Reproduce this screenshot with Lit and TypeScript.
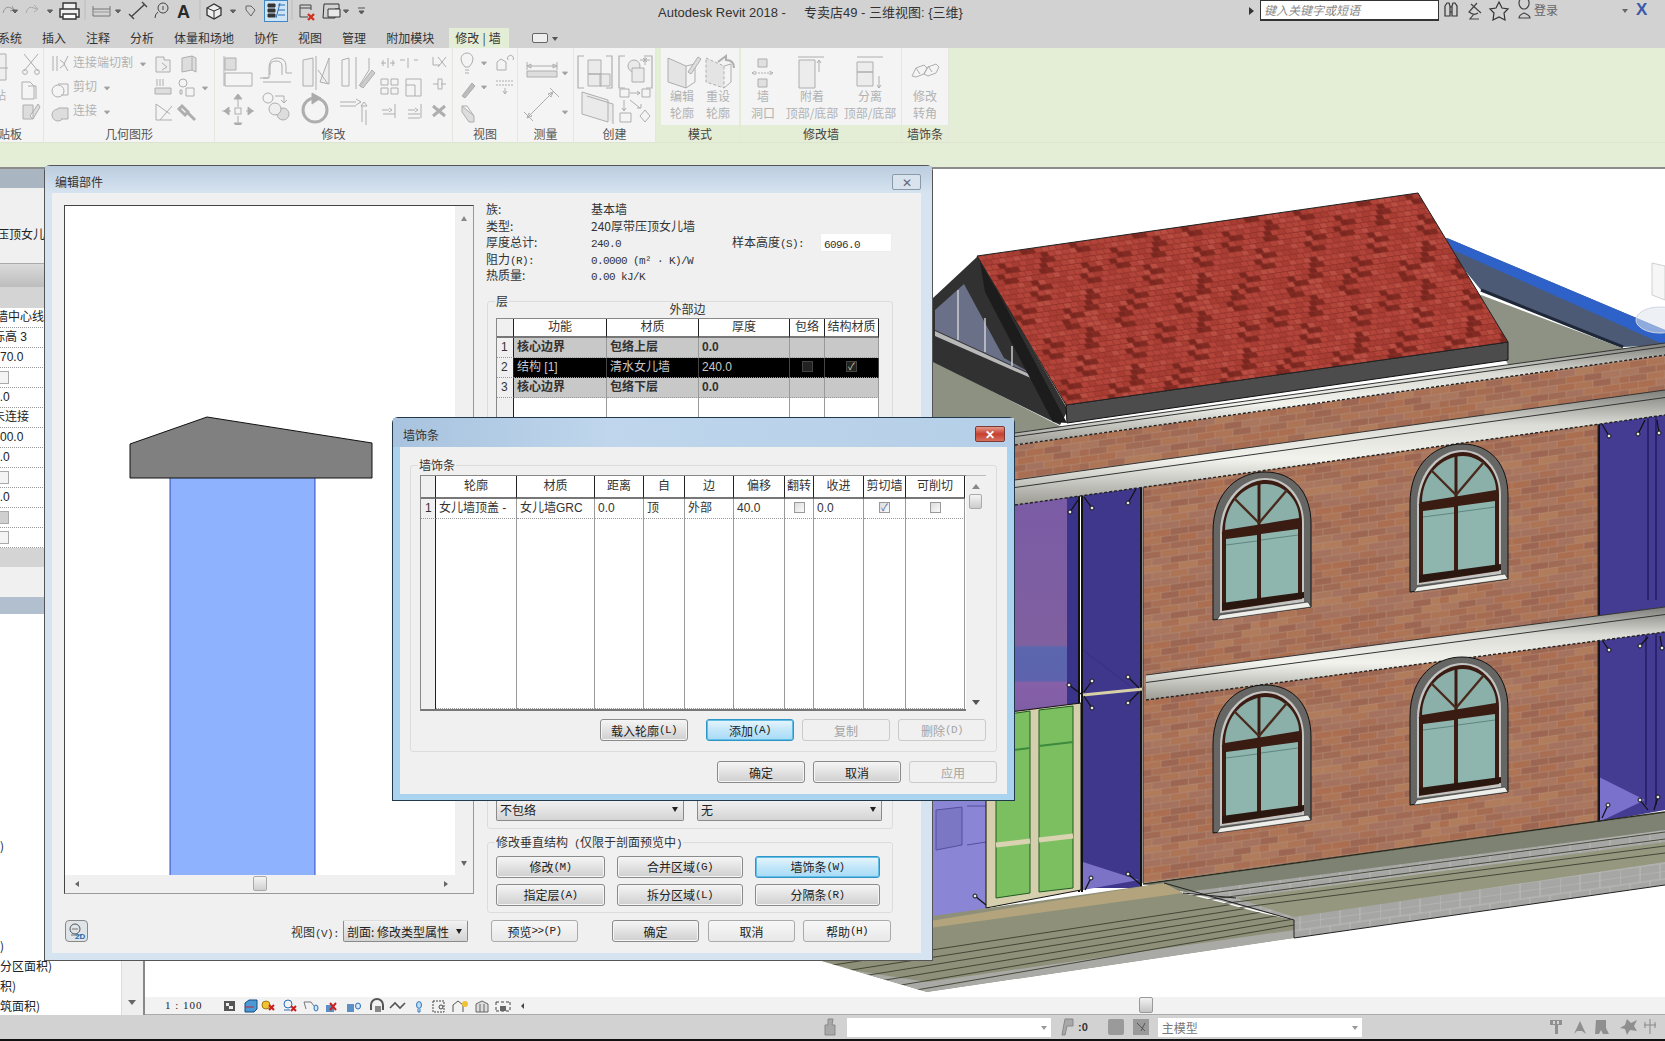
import { LitElement, html, css } from "lit";
import { customElement } from "lit/decorators.js";
import { unsafeSVG } from "lit/directives/unsafe-svg.js";

const arrow = (x: number, y: number, c = "#777") => `<path d="M${x - 2.5} ${y - 1}h5l-2.5 3z" fill="${c}"/>`;
const T = (x: number, y: number, s: string, extra = "") => `<text x="${x}" y="${y}" ${extra}>${s}</text>`;

/* ---------- ribbon drawings, in page coordinates ---------- */
const rb = {
  clip: `
    <path d="M-8 54h14v26h-14z" fill="#eee"/><path d="M-2 80v-12h10" />
    <path d="M24 54l14 17M38 54l-14 17" /><circle cx="25" cy="72" r="2.4"/><circle cx="37" cy="72" r="2.4"/>
    <path d="M22 82h8l4 4v13h-12zM28 86h8v13"/>
    <path d="M23 105h10v14h-10zM38 104l-8 12 3 3 7-12z" fill="#ddd"/>
    ${T(-6, 100, "贴", 'class="t"')}`,
  geom: `
    <path d="M53 56v15M57 56v15M60 60l5 4-5 4M68 56l-4 8 4 7" />
    ${T(73, 67, "连接端切割", 'class="t"')}${arrow(143, 64, "#999")}
    <path d="M156 57h8v3h6v12h-14zM162 63l5 4-5 3" fill="#eee"/><path d="M182 58l10-2v14l-10 2zM192 56l4 2v14l-4-2" fill="#ddd"/>
    <circle cx="58" cy="91" r="6"/><path d="M58 84h10v11h-7" />
    ${T(73, 91, "剪切", 'class="t"')}${arrow(107, 88, "#999")}
    <path d="M157 79v7M160 79v7M163 79v7M155 88h16v6h-16z" fill="#ddd"/><circle cx="183" cy="83" r="4"/><path d="M180 90h2v4h-2zM186 88h8v8h-8z"/>${arrow(205, 88, "#999")}
    <circle cx="58" cy="115" r="6" fill="#ddd"/><path d="M58 108h10v11h-7" fill="#ddd"/>
    ${T(73, 115, "连接", 'class="t"')}${arrow(107, 112, "#999")}
    <path d="M156 104v16h16M156 104l14 10M160 120l12-14"/><path d="M182 106l6 6-3 3-6-6zM187 112l8 8" stroke-width="3"/>`,
  modify: `
    <path d="M224 56v30M225 58h11v12h-11z" fill="#ddd"/><path d="M225 73h27v13h-27z" fill="#f4f4f4"/>
    <path d="M263 82h28M263 78h6v-10q0-10 8-10q9 0 9 8v7h6M268 78h-8M270 75v-8q0-6 6-6q6 0 6 5v9" />
    <path d="M303 60l10-2v28h-10zM316 56v34M329 58v26l-9-2z" fill="#eee"/><path d="M318 70l10 14" />
    <path d="M342 60l7-2v28h-7zM356 57v32M369 58v12l-10 16" fill="none"/><path d="M360 86l12-16 3 3-12 15z" fill="#ccc"/>
    <path d="M238 97v10M238 116v10M222 111h9M246 111h8" /><path d="M238 94l-4 5h8zM238 128l-4-5h8zM224 111l5-4v8zM253 111l-5-4v8z" fill="#aaa"/><rect x="235" y="108" width="6" height="6"/>
    <circle cx="268" cy="98" r="5"/><circle cx="283" cy="114" r="6" fill="#ddd"/><circle cx="275" cy="109" r="6" fill="#eee"/><path d="M275 96h9v7M281 100l3 3 3-3"/>
    <circle cx="315" cy="110" r="12" fill="none" stroke-width="3"/><path d="M312 93l9 5-9 6z" fill="#aaa"/>
    <path d="M340 102h16M340 106h16M356 99l5 3-5 3M362 106v16M366 110v16M364 102l-3 4h6z"/>
    <path d="M383 60v6M393 60v6M381 63h5M390 63h5M388 58v10M400 60h5M414 60h4M408 58v10"/><path d="M433 57v8h7M438 57l8 10M446 57l-8 10"/>
    <path d="M381 79h7v6h-7zM391 79h7v6h-7zM381 88h7v6h-7zM391 88h7v6h-7z"/><path d="M406 79h15v17h-15zM406 85h9v11"/><path d="M433 84h5M441 84h5M438 79h4v10h-4z"/>
    <path d="M382 110h7M389 108l3 2-3 2M395 104v14M383 114h12"/><path d="M408 110h7M415 108l3 2-3 2M421 104v14M408 114h12M408 118h12"/><path d="M433 106l12 10M445 106l-12 10" stroke-width="3"/>`,
  view: `
    <path d="M465 67q-4-4-4-8a6 6 0 0 1 12 0q0 4-4 8z" /><path d="M465 70h4M465 73h4"/>${arrow(484, 63, "#999")}
    <path d="M497 62l4-3 5 3v8h-9zM508 60a3 3 0 1 1 5 0"/>
    <path d="M462 96l10-13 3 3-10 12z" fill="#bbb"/>${arrow(484, 87, "#999")}
    <path d="M496 81h17M496 85h17" stroke-dasharray="2 1"/><path d="M505 88v5M503 91l2 3 2-3"/>
    <path d="M462 106l12 10v6h-5l-7-10z" fill="#ddd"/><path d="M462 106h5l7 10"/>`,
  measure: `
    <path d="M527 66h30M527 62v8M557 62v8M527 66l4-2v4zM557 66l-4-2v4z"/><path d="M527 71h30v6h-30z" fill="#ddd"/>${arrow(565, 73, "#999")}
    <path d="M527 118l26-26M524 112l9 9M550 88l9 9M527 118l2-5 3 3zM553 92l-2 5-3-3z"/>${arrow(565, 112, "#999")}`,
  create: `
    <path d="M584 56h-6v32h6M606 56h6v32h-6" stroke-width="1.2"/><path d="M588 60h13v14h-13zM588 74h13v12h-13zM600 74h10v12h-10z" fill="#eaeaea"/>
    <path d="M625 56h-6v32h6M646 56h6v32h-6" stroke-width="1.2"/><circle cx="634" cy="66" r="6" fill="#eaeaea"/><path d="M632 68h12v14h-12z" fill="#eaeaea"/><path d="M643 58l4 4M647 58l-4 4M645 55v10M640 60h10"/>
    <path d="M582 92l26 8v22l-26-8zM587 96l26 8v20" fill="#eaeaea"/>
    <path d="M620 89h9v8h-9zM642 89h8v8h-8zM630 93h10M637 91l3 2-3 2M624 100v10M622 108l2 3 2-3M630 100l10 8M637 108h4v-4M620 113h11v9h-11z" /><path d="M645 110l5 6-5 6-5-6z"/>`,
  mode: `
    <path d="M668 58l18 8v22l-18-6z" fill="#e4e4e4"/><path d="M686 66l9-2v18l-9 6"/><path d="M688 72l10-15 3 2-10 15z" fill="#ddd"/>
    <path d="M706 58l18 8v22l-18-6z" fill="#e4e4e4" stroke-dasharray="3 2"/><path d="M724 66l7-2v18l-7 6"/><path d="M718 62l8-6v4q8 0 8 8" stroke-width="2"/>
    ${T(682, 101, "编辑", 'class="tc"')}${T(682, 118, "轮廓", 'class="tc"')}${T(718, 101, "重设", 'class="tc"')}${T(718, 118, "轮廓", 'class="tc"')}`,
  wall: `
    <path d="M758 59h9v8h-9zM758 79h9v8h-9z" fill="#e0e0e0"/><path d="M752 73h21M752 73l3-2v4zM773 73l-3-2v4z" stroke-dasharray="2 1"/>
    <path d="M798 57h26M799 60h16v28h-16z" fill="#ececec"/><path d="M819 72v-12M817 63l2-3 2 3"/>
    <path d="M857 57h26M857 62h16v10h-16zM857 72h16v14h-16z" fill="#ececec"/><path d="M879 76v12M877 85l2 3 2-3"/>
    ${T(763, 101, "墙", 'class="tc"')}${T(763, 118, "洞口", 'class="tc"')}
    ${T(812, 101, "附着", 'class="tc"')}${T(812, 118, "顶部/底部", 'class="tc"')}
    ${T(870, 101, "分离", 'class="tc"')}${T(870, 118, "顶部/底部", 'class="tc"')}`,
  sweep: `
    <path d="M912 76l4-8 8-3 3 3-3 6-8 3zM924 74l4-7 8-3 3 3-3 6-8 3z" fill="#f4f4f4"/><path d="M916 68l4 6M928 66l4 6"/>
    ${T(925, 101, "修改", 'class="tc"')}${T(925, 118, "转角", 'class="tc"')}`,
};

/* ---------- quick access, page coordinates ---------- */
const qa = `
  <g fill="none" stroke="#5a5a5a">
    <path d="M3 13q2-8 8-5l3 2M12 6l2 4-4 1" stroke="#999"/>${arrow(15, 11, "#666")}
    <path d="M26 13q2-8 8-5l3 1M34 5l4 4-4 3" stroke="#aaa"/>${arrow(50, 11, "#666")}
    <path d="M63 3h13v6h-13zM60 9h19v8h-19z" stroke="#333" fill="#f0f0f0" stroke-width="1.4"/><path d="M63 14h13v5h-13z" fill="#fff" stroke="#333" stroke-width="1.4"/>
    <path d="M93 9h17v7h-17zM93 6v3M110 6v3" stroke="#777"/><path d="M94 12h15" stroke="#999"/>${arrow(118, 11, "#666")}
    <path d="M131 17l14-13M129 14l5 5M142 2l5 5" stroke="#444" stroke-width="1.4"/>
    <circle cx="163" cy="8" r="5" stroke="#444"/><path d="M155 18q0-4 3-6M163 6v4" stroke="#444"/>
    <path d="M207 8l7-4 7 4v7l-7 4-7-4z" stroke="#333" fill="#eee" stroke-width="1.3"/><path d="M207 8l7 3 7-3M214 11v8" stroke="#333"/>${arrow(233, 11, "#666")}
    <path d="M246 6h5l4 4-4 6-5-6z" stroke="#666"/>
    <rect x="264.5" y="0.5" width="23" height="21" fill="#cde4f7" stroke="#3f88c5"/>
    <path d="M268 4h7v3h-7zM268 9h7v3h-7zM268 14h7v3h-7z" fill="#333" stroke="#333"/><path d="M278 5h7M278 10h7M278 15h7M276 18l4-15" stroke="#2a6cb0"/>
    <path d="M300 5h11v5M300 5v12h8M300 8h11" stroke="#444"/>
    <path d="M308 14l6 6M314 14l-6 6" stroke="#d03020" stroke-width="2.4"/>
    <path d="M324 4h15v5h-4v9h-12z" stroke="#333"/><path d="M328 9h12v8h-12z" stroke="#333" fill="#e8e8e8"/>${arrow(346, 11, "#666")}
    <path d="M358 8h7" stroke="#555"/>${arrow(361.5, 12, "#555")}
  </g>
  <text x="177" y="18" style="font:bold 18px 'Liberation Sans'" fill="#2a2a2a">A</text>
  <path d="M85 0v20M200 0v20M292 0v20" stroke="#bcbcbc"/>`;

const topRight = `
  <g fill="none" stroke="#333" stroke-width="1.2">
    <path d="M2 6l2-3h2l1 3v10h-5zM9 6l1-3h2l2 3v10h-5zM7 7h2M7 12h2"/>
    <path d="M28 4l10 9M34 3l-8 9q5 4 9 1M31 14l-4 5h9" stroke="#444"/>
    <path d="M56 2l3 6 6 1-4 4 1 7-6-3-6 3 1-7-4-4 6-1z" stroke="#333"/>
    <path d="M81 9a5 6 0 1 1 .1 0M76 18q0-3 5-5q6 2 6 5z" stroke="#444"/>
  </g>`;

/* ---------- tiny status / view-bar drawings ---------- */
const viewIcons = `
  <rect x="224" y="5" width="11" height="10" fill="#555"/><path d="M226 7h3v3h-3zM229 10h4v3h-4z" fill="#eee"/>
  <path d="M245 7l4-3h8v9l-3 3h-9z" fill="#4b98d5" stroke="#124d80"/><path d="M245 11h9" stroke="#c23"/>
  <circle cx="266" cy="9" r="4" fill="#f1c232" stroke="#a07a10"/><path d="M269 9l5 5M274 9l-5 5" stroke="#c82020" stroke-width="2"/>
  <circle cx="288" cy="8" r="4" fill="none" stroke="#2a6fb8"/><path d="M284 14h6" stroke="#2a6fb8"/><path d="M291 10l5 5M296 10l-5 5" stroke="#c82020" stroke-width="2"/>
  <path d="M304 6h7l3 4M304 6l2 7" fill="none" stroke="#777"/><ellipse cx="316" cy="12" rx="2" ry="3" fill="#d6e8f7" stroke="#2a6fb8"/>
  <path d="M326 9h8v7h-8z" fill="#5c8fc4"/><path d="M330 7l6 7M336 7l-6 7" stroke="#c82020" stroke-width="2"/>
  <path d="M347 8h7v8h-7z" fill="#5c8fc4"/><ellipse cx="358" cy="10" rx="2.5" ry="3" fill="#d6e8f7" stroke="#2a6fb8"/>
  <path d="M371 14v-5a6 6 0 0 1 12 0v5" fill="none" stroke="#555" stroke-width="2"/><rect x="375" y="10" width="6" height="6" fill="#888"/>
  <path d="M390 12l5-5 5 5 5-5" fill="none" stroke="#555" stroke-width="1.6"/>
  <ellipse cx="419" cy="9" rx="2.5" ry="3.4" fill="#bfdcf3" stroke="#2f78c0"/><path d="M418 13v3h2v-3" fill="none" stroke="#2f78c0"/>
  <path d="M433 5h11v11h-11z" fill="none" stroke="#444" stroke-dasharray="2 1"/><circle cx="441" cy="11" r="2" fill="none" stroke="#444"/>
  <path d="M453 16v-7l5-4 5 4v7" fill="none" stroke="#555"/><circle cx="465" cy="8" r="3" fill="#f0c233"/>
  <path d="M476 8l6-3 6 3v8h-12z" fill="#ddd" stroke="#666"/><path d="M480 8v8M484 8v8" stroke="#666"/>
  <path d="M496 6h14M496 15h14M496 6v9M510 6v9" stroke="#444" stroke-dasharray="3 2" fill="none"/><path d="M500 10h6v5h-6z" fill="#666"/>
  <path d="M524 7v6l-3-3z" fill="#444"/>`;

/* ---------- building ---------- */
function rnd(seed: number) {
  let s = seed;
  return () => ((s = (s * 16807) % 2147483647) / 2147483647);
}
function brickPattern() {
  const r = rnd(7);
  const cols = ["#a86f55", "#a66c52", "#ad7556", "#a06a54", "#aa765e", "#ab6e50", "#a4725e", "#b07c5c", "#9c6652"];
  let s = `<rect width="180" height="56" fill="#b48e78"/>`;
  for (let row = 0; row < 8; row++) {
    for (let c = -1; c < 10; c++) {
      const x = c * 18 + (row % 2 ? 9 : 0);
      s += `<rect x="${x + 0.4}" y="${row * 7 + 0.5}" width="17.4" height="6.4" fill="${cols[Math.floor(r() * cols.length)]}"/>`;
    }
  }
  return `<pattern id="brick" width="180" height="56" patternUnits="userSpaceOnUse" patternTransform="matrix(1,-0.135,0,1,0,0)">${s}</pattern>`;
}
function tilePattern() {
  const r = rnd(31);
  let s = `<rect width="112" height="75" fill="#8d2f28"/>`;
  const grid: string[][] = [];
  for (let row = 0; row < 15; row++) {
    grid.push([]);
    for (let c = 0; c < 16; c++) {
      const v = r();
      grid[row].push(v < 0.5 ? "#b2443a" : v < 0.85 ? "#a83d33" : "#b94e42");
    }
  }
  for (const [cx, cy] of [[2, 2], [8, 1], [13, 4], [5, 6], [11, 9], [1, 10], [7, 12], [14, 13]] as const) {
    for (let k = 0; k < 4; k++) {
      grid[(cy + k) % 15][(cx - (k >> 1) + 16) % 16] = "#7a2720";
      if (k % 2) grid[(cy + k) % 15][(cx - (k >> 1) + 17) % 16] = "#802a22";
    }
  }
  for (let row = 0; row < 15; row++) {
    for (let c = -1; c < 16; c++) {
      const x = c * 7 + (row % 2 ? 3.5 : 0);
      s += `<rect x="${x + 0.4}" y="${row * 5 + 0.4}" width="6.4" height="4.3" fill="${grid[row][(c + 16) % 16]}"/>`;
    }
  }
  return `<pattern id="tile" width="112" height="75" patternUnits="userSpaceOnUse" patternTransform="matrix(1,-0.143,0.604,1,977,256)">${s}</pattern>`;
}
function stonePattern() {
  let s = `<rect width="60" height="24" fill="#a6a6a4"/>`;
  for (let row = 0; row < 3; row++) {
    s += `<path d="M0 ${row * 8}h60" stroke="#bdbdbb"/>`;
    for (let c = 0; c < 3; c++) s += `<path d="M${c * 20 + (row % 2 ? 10 : 0)} ${row * 8}v8" stroke="#bdbdbb"/>`;
  }
  return `<pattern id="stone" width="60" height="24" patternUnits="userSpaceOnUse" patternTransform="matrix(1,-0.14,0,1,0,0)">${s}</pattern>`;
}
function win(dx: number, dy: number) {
  return `<g transform="translate(${dx} ${dy})">
    <path d="M1213 833L1213 745C1213 703 1240 685 1265 685C1294 685 1311 706 1311 737L1311 820Z" fill="#666664" stroke="#111"/>
    <path d="M1220 826L1220 746C1220 711 1244 691 1265 691C1288 691 1304 711 1304 736L1304 815Z" fill="#c4c4c2"/>
    <path d="M1222 824L1222 748C1222 713 1245 693 1266 693C1285 693 1302 712 1302 735L1302 812Z" fill="#3a1c12"/>
    <path d="M1225 743C1225 716 1245 697 1266 697C1284 697 1299 714 1299 731Z" fill="#8bb0aa"/>
    <path d="M1226 752L1257 748L1257 813L1226 818Z" fill="#8eb5ae"/><path d="M1261 747L1298 742L1298 808L1261 812Z" fill="#8eb5ae"/>
    <path d="M1226 758L1257 754M1261 753L1298 748" stroke="#5f8680" stroke-width="1"/>
    <path d="M1222 747L1301 736" stroke="#3a1c12" stroke-width="3.4"/><path d="M1259 695V815" stroke="#3a1c12" stroke-width="3"/>
    <path d="M1259 736L1234 711M1259 736L1287 703" stroke="#4a2a1c" stroke-width="2.4"/>
    <path d="M1222 816L1304 805V811L1222 823Z" fill="#2a1710"/>
    <path d="M1220 828L1308 815L1311 820L1217 833Z" fill="#eeeeea" stroke="#222" stroke-width=".6"/>
  </g>`;
}
function spider(x: number, y: number, tx: number, ty: number) {
  return `<path d="M${x} ${y}L${tx} ${ty}" stroke="#111" stroke-width="1.2"/><circle cx="${tx}" cy="${ty}" r="2" fill="#e8e8e8" stroke="#111"/>`;
}
function cornice(y1: number, y2: number, h: number, x1 = 1015, x2 = 1665) {
  return `<path d="M${x1} ${y1}L${x2} ${y2}L${x2} ${y2 + h}L${x1} ${y1 + h}Z" fill="url(#corn)"/>
    <path d="M${x1} ${y1}L${x2} ${y2}M${x1} ${y1 + h * 0.3}L${x2} ${y2 + h * 0.3}" stroke="#333" stroke-width="1"/>
    <path d="M${x1} ${y1 + h}L${x2} ${y2 + h}" stroke="#222" stroke-width="1.4" stroke-dasharray="3 2"/>`;
}
function building() {
  let stepLines = "";
  for (let i = 0; i < 6; i++) {
    const y = 950 + i * 8;
    stepLines += `<path d="M800 ${y + 20}L1300 ${y - 56 - i * 2}" stroke="#3a3d2e" stroke-width=".9"/>`;
  }
  let baseLines = "";
  for (let i = 0; i < 4; i++) {
    baseLines += `<path d="M1190 ${896 + i * 6}L1665 ${832 + i * 7}" stroke="#3a3d30" stroke-width=".9"/>`;
  }
  return `
  <defs>${brickPattern()}${tilePattern()}${stonePattern()}
    <linearGradient id="corn" x1="0" y1="0" x2="0" y2="1"><stop offset="0" stop-color="#7e7e7a"/><stop offset=".3" stop-color="#dcdcd6"/><stop offset=".6" stop-color="#f3f3ee"/><stop offset="1" stop-color="#9b9b94"/></linearGradient>
    <linearGradient id="purp" x1="0" y1="0" x2="0" y2="1"><stop offset="0" stop-color="#7a5ba6"/><stop offset=".66" stop-color="#80609f"/><stop offset=".67" stop-color="#5a66ad"/><stop offset=".81" stop-color="#5d63ad"/><stop offset=".82" stop-color="#8660a8"/><stop offset="1" stop-color="#7c5da5"/></linearGradient>
    <clipPath id="stepclip"><path d="M818 960L927 992L1294 938L1294 920L1257 912L1220 902L1183 893L1164 883L800 935Z"/></clipPath>
  </defs>
  <!-- far parapet -->
  <path d="M1447 238L1665 330L1665 345L1623 347L1481 290L1440 240Z" fill="#4c5a75"/>
  <path d="M1447 238L1665 330L1665 345L1453 250Z" fill="#2f62c8"/>
  <path d="M1481 290L1623 347" stroke="#1f2838" stroke-width="3"/>
  <path d="M1481 295L1625 349L1509 366L1470 300Z" fill="#8e9284"/>
  <!-- dormer and terrace on the left -->
  <path d="M933 361L1062 427L1015 436L933 447Z" fill="#8d9182"/>
  <path d="M933 298L978 256L1068 410L1060 425L933 362Z" fill="#313131"/>
  <path d="M935 310L964 284L1004 358L1040 378L935 330Z" fill="#6a7088"/>
  <path d="M958 290V340M985 318V352M1012 346V366" stroke="#d5d5d5" stroke-width="1.4"/>
  <path d="M935 331L1040 379L1042 383L935 336Z" fill="#b8b8b8"/>
  <path d="M980 262L1000 296L1067 423L1053 422L985 292Z" fill="#1c1c1c"/>
  <!-- roof -->
  <path d="M1066 405L1508 342L1508 360L1067 423Z" fill="#4c4c4c" stroke="#111"/>
  <path d="M977 256L1418 193L1508 342L1066 405Z" fill="url(#tile)" stroke="#222"/>
  <!-- curtain wall left -->
  <rect x="1015" y="490" width="52" height="235" fill="url(#purp)"/>
  <rect x="1067" y="490" width="13" height="235" fill="#39338a"/>
  <path d="M1083 478H1140V888H1083Z" fill="#3f378c"/>
  <path d="M1083 862L1139 880L1083 890Z" fill="#7c72c6"/>
  <path d="M1083 650L1139 693" stroke="#352f7e"/>
  <path d="M933 801H990V912L933 926Z" fill="#8a85d5"/>
  <path d="M936 810L962 807V845L936 850ZM967 806H986M967 845L986 842" fill="#7b77c5" stroke="#55509c"/>
  <path d="M933 925L990 912" stroke="#222" stroke-width="1.4"/>
  <path d="M1079 490V892M1082 490V892M1141 478V888" stroke="#111" stroke-width="2"/>
  <!-- door -->
  <path d="M986 715L1081 703V890L986 908Z" fill="#d6cfae" stroke="#111"/>
  <path d="M996 716L1030 711V893L996 898Z" fill="#7cbf60" stroke="#205a20"/>
  <path d="M1039 710L1073 706V888L1039 892Z" fill="#7cbf60" stroke="#205a20"/>
  <path d="M996 752L1030 748M1039 746L1073 742" stroke="#3c8a3c" stroke-width="2"/>
  <path d="M996 845L1030 841M1039 840L1073 836" stroke="#d9d3b2" stroke-width="5"/>
  <path d="M1083 695L1143 689" stroke="#d7cfa8" stroke-width="3"/>
  ${spider(1081, 694, 1069, 685)}${spider(1084, 692, 1092, 681)}${spider(1084, 696, 1092, 708)}${spider(1139, 688, 1128, 677)}${spider(1139, 692, 1128, 703)}
  ${spider(1085, 890, 1091, 878)}${spider(1140, 884, 1128, 874)}${spider(986, 905, 975, 896)}
  ${spider(1078, 500, 1070, 512)}${spider(1084, 497, 1092, 508)}${spider(1136, 489, 1128, 503)}
  <!-- right blue panels -->
  <path d="M1598 405L1665 396V607L1598 616Z" fill="#443c92"/>
  <path d="M1599 637L1665 630V810L1599 822Z" fill="#443c92"/>
  <path d="M1599 777L1645 800L1599 822Z" fill="#7a71cc"/>
  <path d="M1648 400V600M1646 632V805M1656 396V600M1656 632V805" stroke="#211c62" stroke-width="1.5"/>
  <path d="M1599 405V620M1599 630V822" stroke="#111" stroke-width="2"/>
  ${spider(1602, 424, 1609, 436)}${spider(1645, 420, 1638, 434)}${spider(1657, 420, 1659, 433)}
  ${spider(1602, 640, 1609, 650)}${spider(1648, 637, 1640, 646)}${spider(1660, 636, 1662, 648)}
  ${spider(1602, 818, 1608, 805)}${spider(1648, 810, 1640, 800)}${spider(1654, 810, 1658, 797)}
  <!-- brick -->
  <path d="M1015 445L1665 355V395L1598 405V822L1143 883V475L1015 490Z" fill="url(#brick)"/>
  <path d="M1143 480V883M1598 405V822" stroke="#222"/>
  ${cornice(433, 343, 12)}
  ${cornice(480, 390, 25)}
  ${cornice(675, 607, 25, 1146)}
  ${win(0, -213)}${win(197, -241)}${win(0, 0)}${win(197, -28)}
  <!-- base -->
  <path d="M1143 884L1598 822L1665 812V835L1240 897L1190 893Z" fill="#7e8272"/>
  <path d="M1143 884L1665 812" stroke="#2a2c20" stroke-width="1.4"/>
  <path d="M1186 892L1665 830V885L1294 938L1294 920Z" fill="url(#stone)"/>
  <path d="M1236 898L1665 842V862L1294 917Z" fill="#95987f"/>
  ${baseLines}
  <path d="M1665 885L1294 938" stroke="#222"/>
  <g clip-path="url(#stepclip)">
    <rect x="790" y="870" width="520" height="130" fill="#8e9079"/>
    <path d="M800 942L1164 883L1183 893L800 946Z" fill="#b3a47e"/>
    <path d="M800 970L927 992L1294 938V930L927 982L800 962Z" fill="#a9a9a6"/>
    ${stepLines}
  </g>
  <path d="M1164 883L1294 920V938" fill="none" stroke="#222"/>
  <path d="M1183 893L1236 898" stroke="#222"/>
  <!-- view cube -->
  <path d="M1652 263L1665 266V300L1652 295Z" fill="#f6f6f6" stroke="#d0d0d0"/>
  <ellipse cx="1660" cy="320" rx="24" ry="13" fill="#dfe5ee" fill-opacity=".55" stroke="#cfd5e0"/>`;
}

const m = (s: string) => html`<span class="m">${s}</span>`;
const cb = (on = false) => html`<span class="cb">${on ? "✓" : ""}</span>`;

@customElement("app-root")
export class AppRoot extends LitElement {
  static styles = css`
    :host { display: block; position: relative; width: 1665px; height: 1041px; overflow: hidden; background: #d2d2d2;
      font: 12px "Noto Sans CJK SC", "Liberation Sans", sans-serif; color: #222; }
    svg { display: block; }
    text { font-family: "Noto Sans CJK SC", sans-serif; font-size: 12px; }
    .m { font: 11px "Liberation Mono", monospace; letter-spacing: -.6px; }

    .top { display: flex; height: 28px; }
    .qa { flex: none; width: 380px; height: 28px; }
    .title { margin-left: 278px; padding-top: 2px; font: 13px "Liberation Sans", "Noto Sans CJK SC", sans-serif; color: #333; white-space: pre; }
    .right { margin-left: auto; flex: none; width: 416px; display: flex; align-items: flex-start; }
    .tri { width: 0; height: 0; border: 4px solid transparent; border-left: 5px solid #333; margin: 7px 0 0 0; }
    .search { flex: none; width: 179px; height: 21px; margin-left: 2px; border: 1px solid #333; border-bottom-width: 2px; background: #fff; box-sizing: border-box; color: #888; font-style: italic; padding-left: 3px; line-height: 17px; }
    .tico { width: 96px; height: 22px; margin-left: 4px; flex: none; }
    .login { margin-left: -5px; color: #666; line-height: 20px; }
    .xb { flex: none; width: 29px; font: bold 17px "Liberation Sans", sans-serif; color: #3c58a8; line-height: 20px; }
    .drop { margin: 9px 8px 0 auto; border: 3px solid transparent; border-top: 4px solid #666; width: 0; height: 0; }

    .tabs { display: flex; height: 20px; gap: 20px; align-items: stretch; margin-left: -2px; line-height: 20px; color: #333; }
    .tab.on { background: #e4edd6; margin-left: -5px; padding: 0 6px; width: 48px; white-space: nowrap; letter-spacing: .2px; }
    .tabopt { margin-left: 3px; display: flex; align-items: center; gap: 4px; }
    .tabopt i { display: block; width: 16px; height: 10px; border: 1px solid #666; border-radius: 2px; box-sizing: border-box; background: #eee; }
    .tabopt b { border: 3px solid transparent; border-top: 4px solid #555; margin-top: 4px; }

    .ribbon { display: flex; height: 94px; background: #e4edd6; }
    .pn { flex: none; display: flex; flex-direction: column; background: #f4f4f4; box-sizing: border-box; border-right: 1px solid #e4e6e0; }
    .pn svg { flex: none; height: 77px; }
    .pn .g { fill: none; stroke: #aeaeae; stroke-width: 1; }
    .pn .t, .pn .tc { fill: #b2b2b2; stroke: none; }
    .pn .tc { text-anchor: middle; }
    .pn .lb { flex: 1; text-align: center; line-height: 17px; color: #555; white-space: nowrap; }
    .pn.tint .lb { background: #e4edd6; color: #444; }
    .pn.clipped .lb { text-align: left; margin-left: -2px; }
    .opts { height: 27px; background: #e4edd6; box-sizing: border-box; border-top: 1px solid #dde5cf; border-bottom: 2px solid #8b8b8b; }

    .main { display: flex; height: 846px; background: #fff; }
    .left { flex: none; width: 145px; border-right: 2px solid #888; box-sizing: border-box; background: #f0f0f0; display: flex; flex-direction: column; overflow: hidden; }
    .lh { height: 19px; background: #a9b6c2; flex: none; }
    .lname { height: 75px; flex: none; padding-top: 38px; box-sizing: border-box; margin-left: -3px; white-space: nowrap; line-height: 16px; }
    .lcombo { height: 24px; flex: none; background: linear-gradient(#dadada, #bdbdbd); border-top: 1px solid #aaa; box-sizing: border-box; }
    .lgray { height: 21px; flex: none; background: #d4d4d4; }
    .lrow { height: 20px; flex: none; background: #fff; border-bottom: 1px dotted #999; box-sizing: border-box; line-height: 19px; white-space: nowrap; font-family: "Liberation Sans", "Noto Sans CJK SC", sans-serif; }
    .lrow i { display: block; width: 11px; height: 11px; margin: 3px 0 0 -4px; border: 1px solid #aaa; background: #f4f4f4; }
    .lrow i.dk { background: #cfcfcf; }
    .lgray2 { height: 19px; flex: none; background: #d4d4d4; }
    .lgap { height: 30px; flex: none; }
    .lband { height: 17px; flex: none; background: #b2bfcf; }
    .lower { flex: 1; background: #fff; display: flex; }
    .lst { flex: 1; padding-top: 222px; line-height: 20px; white-space: nowrap; overflow: hidden; }
    .lst div { height: 20px; font-size: 12px; }
    .lsb { flex: none; width: 21px; background: #efefef; border-left: 1px solid #ddd; position: relative; }
    .lsb::after { content: ""; position: absolute; left: 6px; bottom: 7px; border: 4px solid transparent; border-top: 5px solid #666; }

    .cv { flex: 1; display: flex; flex-direction: column; min-width: 0; }
    .cv > svg { flex: none; }
    .vbar { height: 18px; flex: none; background: #f2f2f2; display: flex; border-bottom: 1px solid #aaa; box-sizing: border-box; }
    .vbar svg { flex: none; width: 400px; height: 18px; margin-top: -1px; }
    .thumb { margin-left: 594px; width: 14px; height: 16px; border: 1px solid #999; border-radius: 2px; box-sizing: border-box; background: linear-gradient(#f2f2f2, #c4c4c4); }

    .status { height: 24px; display: flex; align-items: center; background: #d2d2d2; }
    .sbox { flex: none; height: 19px; background: #fff; position: relative; box-sizing: border-box; padding-left: 4px; line-height: 19px; color: #777; }
    .sbox::after { content: ""; position: absolute; right: 4px; top: 8px; border: 3px solid transparent; border-top: 4px solid #999; }
    .black { height: 2px; background: #111; }

    /* dialogs */
    .dlg { position: absolute; box-sizing: border-box; display: flex; flex-direction: column; box-shadow: 0 0 0 1px #555; border-radius: 5px 5px 0 0; }
    .d1 { left: 45px; top: 166px; width: 887px; height: 794px; background: #d6e3f0; padding: 0 7px 7px 7px; }
    .d2 { left: 393px; top: 418px; width: 621px; height: 382px; background: #a9d3ee; padding: 0 7px 6px 7px; box-shadow: 0 0 0 1px #22384c; }
    .tbar { flex: none; display: flex; align-items: center; height: 27px; margin: 0 -7px; padding: 4px 10px 0; box-sizing: border-box; background: linear-gradient(#bccde0, #d6e3f0); color: #333; }
    .d2 .tbar { height: 29px; padding-top: 3px; background: linear-gradient(90deg, #a8c3df 0, #bfd6ec 35%, #b5cfe8 100%); }
    .cl1 { margin-left: auto; margin-right: 1px; width: 29px; height: 16px; border: 1px solid #8a9aa8; border-radius: 2px; background: #d8e3ee; box-sizing: border-box; text-align: center; line-height: 13px; color: #667; font-size: 12px; }
    .cl2 { margin-left: auto; margin-right: -1px; width: 30px; height: 16px; border: 1px solid #7c3a34; border-radius: 2px; background: linear-gradient(#e39a8c, #c73f2f 50%, #d5705f); box-sizing: border-box; text-align: center; line-height: 13px; color: #fff; font-weight: bold; font-size: 12px; }
    .body { flex: 1; background: #f0f0f0; min-height: 0; }
    .b1 { padding: 12px 12px 0 12px; margin-right: 4px; }
    .top1 { display: flex; height: 708px; }
    .prev { flex: none; width: 410px; height: 689px; box-sizing: border-box; border: 1px solid #999; border-top-color: #444; border-left-color: #444; display: grid; grid-template-columns: 1fr 18px; grid-template-rows: 1fr 18px; background: #f0f0f0; }
    .prev svg { background: #fff; width: 390px; height: 669px; }
    .vs, .hs { display: flex; align-items: center; justify-content: space-between; }
    .vs { flex-direction: column; padding: 7px 0 6px; }
    .vs i { display: block; border: 3.5px solid transparent; }
    .vs i.u { border-bottom: 5px solid #888; }
    .vs i.d { border-top: 5px solid #666; }
    .hs { padding: 0 4px 0 7px; position: relative; }
    .hs i { display: block; border: 3.5px solid transparent; }
    .hs i.l { border-right: 4px solid #666; }
    .hs i.r { border-left: 4px solid #666; }
    .hs .th { position: absolute; left: 188px; top: 1px; width: 14px; height: 15px; border: 1px solid #aaa; border-radius: 2px; background: linear-gradient(#f4f4f4, #cfcfcf); box-sizing: border-box; }
    .col { margin-left: 12px; flex: none; width: 407px; font-size: 12px; }
    .info { display: grid; grid-template-columns: 105px 141px 88px 72px; grid-auto-rows: 16.5px; line-height: 16.5px; margin-top: -4px; white-space: nowrap; color: #333; }
    .inp { background: #fff; height: 19px; margin-top: -1px; padding-left: 3px; border: 1px solid #eee; box-sizing: border-box; line-height: 17px; }
    .grp { position: relative; border: 1px solid #dcdcdc; border-radius: 3px; box-sizing: border-box; margin-left: 1px; }
    .lg { position: absolute; left: 7px; top: -9px; background: #f0f0f0; padding: 0 1px; line-height: 16px; color: #333; }
    .g1 { margin-top: 17px; height: 528px; padding: 0 13px 0 8px; display: flex; flex-direction: column; }
    .side { text-align: center; height: 16px; line-height: 14px; flex: none; padding-left: 0; color: #333; }
    .tb { display: grid; background: #fff; border-top: 1px solid #888; border-left: 1px solid #888; color: #333; }
    .tb1 { flex: 1; grid-template-columns: 17px 93px 92px 91px 35px 54px; grid-template-rows: 19px 20px 20px 20px 20px 1fr; }
    .c { border-right: 1px solid #999; border-bottom: 1px dotted #999; box-sizing: border-box; padding-left: 3px; white-space: nowrap; overflow: hidden; line-height: 18px; font-family: "Liberation Sans", "Noto Sans CJK SC", sans-serif; }
    .h { border-right: 1px solid #222; border-bottom: 2px solid #777; text-align: center; padding: 0; line-height: 17px; }
    .tb2 .h { line-height: 21px; }
    .n { background: #f0f0f0; border-right: 1px solid #222; padding-left: 4px; }
    .gy { background: #c8c8c8; font-weight: bold; }
    .bk { background: #000; color: #c9c9c9; border-right-color: #444; }
    .ctr { text-align: center; padding: 0; }
    .cb { display: inline-block; width: 11px; height: 11px; border: 1px solid #9a9a9a; background: linear-gradient(135deg, #dcdcdc, #fafafa); box-sizing: border-box; vertical-align: -1px; color: #3b5ca8; font-size: 10px; line-height: 9px; text-align: center; overflow: hidden; }
    .bk .cb { background: #222; border-color: #444; color: #d8d0a0; }
    .combos { flex: none; display: flex; gap: 13px; margin: 8px 0 7px; height: 22px; }
    .combo { flex: none; box-sizing: border-box; border: 1px solid #8a8a8a; border-top-color: #ddd; border-radius: 2px; background: linear-gradient(#f2f2f2, #d4d4d4); padding-left: 3px; display: flex; align-items: center; justify-content: space-between; height: 22px; white-space: nowrap; overflow: hidden; }
    .combo::after { content: ""; flex: none; margin: 3px 5px 0 3px; border: 3.5px solid transparent; border-top: 5px solid #222; }
    .g2 { margin-top: 13px; height: 71px; padding: 13px 8px 0; display: grid; grid-template-columns: 109px 126px 125px; grid-template-rows: 22px 22px; column-gap: 12px; row-gap: 6px; }
    .btn { display: flex; align-items: center; justify-content: center; box-sizing: border-box; height: 22px; border: 1px solid #8a8a8a; border-radius: 3px; background: linear-gradient(#f5f5f5, #e4e4e4 45%, #cfcfcf); color: #222; white-space: nowrap; box-shadow: inset 0 0 0 1px #f5f5f5; }
    .btn.off { color: #a4a4a4; border-color: #cacaca; background: #f0f0f0; box-shadow: none; }
    .btn.fc { border: 1px solid #2f94c6; background: linear-gradient(#e8f6fd, #c2e6f9 50%, #a7dbf6); box-shadow: inset 0 0 0 1px #62bde6; }
    .btn.lt { border-color: #aaa; background: linear-gradient(#f7f7f7, #e8e8e8); box-shadow: none; }
    .botrow { display: flex; align-items: center; height: 22px; margin-top: 7px; }
    .ic2d { flex: none; width: 23px; height: 22px; border: 1px solid #888; border-radius: 4px; box-sizing: border-box; background: #dfe4e8; margin-left: 1px; }
    .vlab { margin-left: 203px; width: 52px; flex: none; white-space: nowrap; color: #333; }

    .b2 { padding: 18px 10px 0 10px; display: flex; flex-direction: column; }
    .g3 { flex: none; margin: 0; height: 287px; padding: 9px 10px 0 9px; border-radius: 3px; }
    .t2wrap { display: flex; height: 236px; }
    .tb2 { flex: 1; grid-template-columns: 15px 81px 78px 49px 41px 49px 51px 29px 50px 42px 59px; grid-template-rows: 23px 20px 1fr; border-bottom: 2px solid #777; border-left-color: #888; }
    .sb2 { flex: none; width: 20px; background: #f0f0f0; position: relative; border-top: 1px solid #bbb; }
    .sb2 .up { position: absolute; left: 6px; top: 4px; border: 4px solid transparent; border-bottom: 5px solid #888; }
    .sb2 .dn { position: absolute; left: 6px; bottom: 2px; border: 4px solid transparent; border-top: 5px solid #555; }
    .sb2 .th { position: absolute; left: 3px; top: 18px; width: 13px; height: 15px; border: 1px solid #aaa; border-radius: 2px; box-sizing: border-box; background: linear-gradient(#f4f4f4, #ccc); }
    .r2 { display: flex; justify-content: flex-end; gap: 8px; margin-top: 8px; }
    .r2 .btn { width: 88px; }
    .r2 .btn:first-child { margin-right: 10px; }
    .r3 { display: flex; justify-content: flex-end; gap: 8px; margin-top: 9px; }
    .r3 .btn { width: 88px; }
  `;

  ribbonPanel(w: number, x0: number, label: string, content: string, cls = "") {
    return html`<div class="pn ${cls}" style="width:${w}px">
      <svg width="${w}" height="77" viewBox="${x0} 48 ${w} 77"><g class="g">${unsafeSVG(content)}</g></svg>
      <div class="lb">${label}</div>
    </div>`;
  }

  render() {
    const rows = [
      ["-4", "墙中心线"], ["-7", "标高 3"], ["0", "70.0"], ["", "cb"], ["-7", "0.0"], ["-7", "未连接"], ["0", "00.0"], ["-7", "0.0"], ["", "cb"], ["-7", "0.0"], ["", "dk"], ["", "cb"],
    ];
    const list = [")", "", "", "", "", ")", "分区面积)", "积)", "筑面积)"];
    const t1h = ["", "功能", "材质", "厚度", "包络", "结构材质"];
    const t2h = ["", "轮廓", "材质", "距离", "自", "边", "偏移", "翻转", "收进", "剪切墙", "可削切"];
    return html`
      <div class="top">
        <svg class="qa" viewBox="0 0 380 28">${unsafeSVG(qa)}</svg>
        <div class="title">Autodesk Revit 2018 -     专卖店49 - 三维视图: {三维}</div>
        <div class="right">
          <div class="tri"></div>
          <div class="search">键入关键字或短语</div>
          <svg class="tico" viewBox="0 0 96 22">${unsafeSVG(topRight)}</svg>
          <span class="login">登录</span>
          <span class="drop"></span>
          <span class="xb">X</span>
        </div>
      </div>
      <div class="tabs">
        <span>系统</span><span>插入</span><span>注释</span><span>分析</span><span>体量和场地</span><span>协作</span><span>视图</span><span>管理</span><span>附加模块</span>
        <span class="tab on">修改 | 墙</span>
        <span class="tabopt"><i></i><b></b></span>
      </div>
      <div class="ribbon">
        ${this.ribbonPanel(44, 0, "贴板", rb.clip, "clipped")}
        ${this.ribbonPanel(171, 44, "几何图形", rb.geom)}
        ${this.ribbonPanel(238, 215, "修改", rb.modify)}
        ${this.ribbonPanel(65, 453, "视图", rb.view)}
        ${this.ribbonPanel(56, 518, "测量", rb.measure)}
        ${this.ribbonPanel(82, 574, "创建", rb.create)}
        <div style="flex:none;width:5px"></div>
        ${this.ribbonPanel(79, 661, "模式", rb.mode, "tint")}
        <div style="flex:none;width:1px"></div>
        ${this.ribbonPanel(161, 741, "修改墙", rb.wall, "tint")}
        ${this.ribbonPanel(47, 902, "墙饰条", rb.sweep, "tint")}
      </div>
      <div class="opts"></div>
      <div class="main">
        <div class="left">
          <div class="lh"></div>
          <div class="lname">压顶女儿墙</div>
          <div class="lcombo"></div>
          <div class="lgray"></div>
          ${rows.map(([o, t]) => html`<div class="lrow">
            ${t === "cb" ? html`<i></i>` : t === "dk" ? html`<i class="dk"></i>` : html`<span style="display:block;margin-left:${o}px">${t}</span>`}
          </div>`)}
          <div class="lgray2"></div>
          <div class="lgap"></div>
          <div class="lband"></div>
          <div class="lower">
            <div class="lst">${list.map((s) => html`<div>${s}</div>`)}</div>
            <div class="lsb"></div>
          </div>
        </div>
        <div class="cv">
          <svg width="1520" height="828" viewBox="145 169 1520 828">${unsafeSVG(building())}</svg>
          <div class="vbar">
            <svg viewBox="145 0 400 18">
              <text x="165" y="13" style="font:11px 'Liberation Serif';letter-spacing:1px" fill="#222">1 : 100</text>${unsafeSVG(viewIcons)}
            </svg>
            <div class="thumb"></div>
          </div>
        </div>
      </div>
      <div class="status">
        <svg width="20" height="20" viewBox="0 0 20 20" style="margin-left:821px;flex:none"><path d="M7 2h5l-1 6h3v10h-10v-10h3z" fill="#a8a8a8" stroke="#888"/></svg>
        <div class="sbox" style="width:204px;margin-left:6px"></div>
        <svg width="20" height="20" viewBox="0 0 20 20" style="margin-left:6px;flex:none"><path d="M8 2h8v7h-6l-2 9h-3l2-11z" fill="#a8a8a8" stroke="#888"/></svg>
        <span style="font:bold 11px 'Liberation Sans';margin-left:1px;color:#333">:0</span>
        <div style="flex:none;width:16px;height:16px;background:#9a9a9a;margin-left:20px;border-radius:2px"></div>
        <svg width="16" height="16" viewBox="0 0 16 16" style="margin-left:9px;flex:none"><path d="M0 0h16v16h-16z" fill="#9a9a9a"/><path d="M4 4l8 8M12 4l-4 8" stroke="#555"/></svg>
        <div class="sbox" style="width:204px;margin-left:9px">主模型</div>
        <svg width="115" height="20" viewBox="0 0 115 20" style="margin-left:186px;flex:none" fill="#8f8f8f">
          <path d="M2 3h12v5h-4v9h-3v-9h-5zM5 4v3h2v-3zM9 4v3h2v-3z"/><path d="M26 17l6-13 6 13-4-3h-5zM30 8h4"/><path d="M48 3h10v8l3 6h-6l-2-4-2 4h-4zM50 6h6"/><path d="M79 2l4 4 6-3-3 6 3 5-7-1-3 5-2-6-5-1 5-3z"/><path d="M102 2v15M96 8h12M97 5v6M107 5v6" stroke="#888" fill="none"/>
        </svg>
      </div>
      <div class="black"></div>

      <div class="dlg d1">
        <div class="tbar"><span>编辑部件</span><span class="cl1">✕</span></div>
        <div class="body b1">
          <div class="top1">
            <div class="prev">
              <svg viewBox="65 206 390 669">
                <path d="M170 478H315V880H170Z" fill="#8fb2ff"/>
                <path d="M170 478V880M315 478V880" stroke="#0b2aa8" stroke-width=".8"/>
                <path d="M130 444L207 417L372 443V478H130Z" fill="#808080" stroke="#111" stroke-width="1"/>
              </svg>
              <div class="vs"><i class="u"></i><i class="d"></i></div>
              <div class="hs"><i class="l"></i><span class="th"></span><i class="r"></i></div>
              <div></div>
            </div>
            <div class="col">
              <div class="info">
                <div>族:</div><div>基本墙</div><div></div><div></div>
                <div>类型:</div><div>240厚带压顶女儿墙</div><div></div><div></div>
                <div>厚度总计:</div><div>${m("240.0")}</div><div>样本高度${m("(S):")}</div><div class="inp">${m("6096.0")}</div>
                <div>阻力${m("(R):")}</div><div>${m("0.0000 (m² · K)/W")}</div><div></div><div></div>
                <div>热质量:</div><div>${m("0.00 kJ/K")}</div><div></div><div></div>
              </div>
              <div class="grp g1">
                <span class="lg">层</span>
                <div class="side">外部边</div>
                <div class="tb tb1">
                  ${t1h.map((s, i) => html`<div class="c h ${i === 0 ? "n" : ""}">${s}</div>`)}
                  <div class="c n">1</div><div class="c gy">核心边界</div><div class="c gy">包络上层</div><div class="c gy">0.0</div><div class="c gy"></div><div class="c gy"></div>
                  <div class="c n">2</div><div class="c bk">结构 [1]</div><div class="c bk">清水女儿墙</div><div class="c bk">240.0</div><div class="c bk ctr">${cb()}</div><div class="c bk ctr">${cb(true)}</div>
                  <div class="c n">3</div><div class="c gy">核心边界</div><div class="c gy">包络下层</div><div class="c gy">0.0</div><div class="c gy"></div><div class="c gy"></div>
                  <div class="c n"></div><div class="c"></div><div class="c"></div><div class="c"></div><div class="c"></div><div class="c"></div>
                  <div class="c n"></div><div class="c"></div><div class="c"></div><div class="c"></div><div class="c"></div><div class="c"></div>
                </div>
                <div class="combos">
                  <div class="combo" style="width:188px">不包络</div>
                  <div class="combo" style="width:185px">无</div>
                </div>
              </div>
              <div class="grp g2">
                <span class="lg">修改垂直结构${m(" (")}仅限于剖面预览中${m(")")}</span>
                <div class="btn">修改${m(" (M)")}</div><div class="btn">合并区域${m(" (G)")}</div><div class="btn fc">墙饰条${m(" (W)")}</div>
                <div class="btn">指定层${m(" (A)")}</div><div class="btn">拆分区域${m(" (L)")}</div><div class="btn">分隔条${m(" (R)")}</div>
              </div>
            </div>
          </div>
          <div class="botrow">
            <div class="ic2d"><svg width="21" height="20" viewBox="0 0 21 20"><circle cx="9" cy="8" r="5" fill="none" stroke="#555"/><path d="M6 8h6M5 14h11" stroke="#777"/><text x="9" y="18" style="font:bold 8px 'Liberation Sans'" fill="#2a6cb0">2D</text></svg></div>
            <span class="vlab">视图${m("(V):")}</span>
            <div class="combo" style="width:125px">剖面: 修改类型属性</div>
            <div class="btn lt" style="width:87px;margin-left:23px">预览 ${m(">>(P)")}</div>
            <div class="btn" style="width:87px;margin-left:34px">确定</div>
            <div class="btn lt" style="width:87px;margin-left:9px">取消</div>
            <div class="btn lt" style="width:88px;margin-left:8px">帮助${m("(H)")}</div>
          </div>
        </div>
      </div>

      <div class="dlg d2">
        <div class="tbar"><span>墙饰条</span><span class="cl2">✕</span></div>
        <div class="body b2">
          <div class="grp g3">
            <span class="lg">墙饰条</span>
            <div class="t2wrap">
              <div class="tb tb2">
                ${t2h.map((s, i) => html`<div class="c h ${i === 0 ? "n" : ""}">${s}</div>`)}
                <div class="c n">1</div><div class="c">女儿墙顶盖 -</div><div class="c">女儿墙GRC</div><div class="c">0.0</div><div class="c">顶</div><div class="c">外部</div><div class="c">40.0</div><div class="c ctr">${cb()}</div><div class="c">0.0</div><div class="c ctr">${cb(true)}</div><div class="c ctr">${cb()}</div>
                ${t2h.map((_, i) => html`<div class="c ${i === 0 ? "n" : ""}" style="${i === 0 ? "border-bottom:none" : ""}"></div>`)}
              </div>
              <div class="sb2"><span class="up"></span><span class="th"></span><span class="dn"></span></div>
            </div>
            <div class="r2">
              <div class="btn">载入轮廓${m(" (L)")}</div><div class="btn fc">添加${m(" (A)")}</div><div class="btn off">复制</div><div class="btn off">删除${m(" (D)")}</div>
            </div>
          </div>
          <div class="r3">
            <div class="btn">确定</div><div class="btn">取消</div><div class="btn off">应用</div>
          </div>
        </div>
      </div>
    `;
  }
}
